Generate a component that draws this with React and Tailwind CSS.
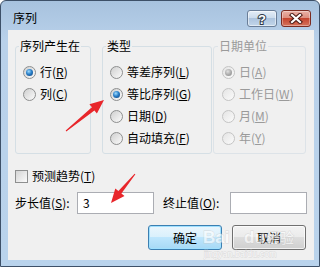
import React from "react";

function Radio({ checked, disabled, text, m }) {
  return (
    <div className="flex h-[22px] items-center">
      <span
        className={
          disabled
            ? "flex h-[13px] w-[13px] shrink-0 items-center justify-center rounded-full border border-[#c4c4c4] bg-[linear-gradient(135deg,#e4e4e4,#fbfbfb)]"
            : "flex h-[13px] w-[13px] shrink-0 items-center justify-center rounded-full border border-[#8e8f8f] bg-[linear-gradient(135deg,#cfcfcf,#fbfbfb)]"
        }
      >
        {checked && (
          <span
            className={
              disabled
                ? "h-[7px] w-[7px] rounded-full bg-[radial-gradient(circle_at_40%_35%,#e0e0e0_0%,#a8a8a8_55%,#8a8a8a_100%)]"
                : "h-[7px] w-[7px] rounded-full bg-[radial-gradient(circle_at_40%_35%,#9fdcff_0%,#2a7fc8_45%,#0b3b75_100%)]"
            }
          />
        )}
      </span>
      <span className={disabled ? "ml-[4px] text-[12px] leading-[14px] text-[#9a9a9a]" : "ml-[4px] text-[12px] leading-[14px] text-black"}>
        {text}(<span className="underline">{m}</span>)
      </span>
    </div>
  );
}

function Group({ title, disabled, className, inner, children }) {
  return (
    <fieldset className={className}>
      <legend className={disabled ? "ml-[4px] px-[1px] text-[12px] leading-[14px] text-[#9a9a9a]" : "ml-[3px] px-[1px] text-[12px] leading-[14px] text-black"}>
        {title}
      </legend>
      <div className={inner}>{children}</div>
    </fieldset>
  );
}

export default function App() {
  return (
    <div className="relative h-[268px] w-[321px] overflow-hidden bg-white font-['Noto_Sans_CJK_SC','Noto_Sans',sans-serif]">
      <div className="flex h-[267px] w-[320px] flex-col rounded-t-[6px] border border-[#3d5068] bg-[linear-gradient(#a7c2de,#b9d1ea_40px,#b9d3ec)]">
        {/* Title bar */}
        <div className="flex h-[29px] shrink-0 items-start">
          <span className="ml-[12px] mt-[9px] text-[12px] leading-[16px] text-black">序列</span>
          <div className="ml-auto mr-[8px] mt-[9px] flex gap-[4px]">
            <div className="flex h-[17px] w-[30px] items-center justify-center rounded-[3px] border border-[#6a7e98] bg-[linear-gradient(#e4edf7,#c9daec_50%,#adc4de_50%,#c2d6ea)] shadow-[inset_0_0_0_1px_rgba(255,255,255,0.5)]">
              <svg width="14" height="14" viewBox="0 0 14 14">
                <text x="7" y="12" textAnchor="middle" fontSize="13" fontWeight="bold" fontFamily="Liberation Sans, sans-serif" fill="#fff" stroke="#2e3a48" strokeWidth="2" paintOrder="stroke">?</text>
              </svg>
            </div>
            <div className="flex h-[17px] w-[30px] items-center justify-center rounded-[3px] border border-[#7b2c22] bg-[linear-gradient(#eab1a6,#dc8b7b_50%,#c5452f_50%,#d5735c)] shadow-[inset_0_0_0_1px_rgba(255,255,255,0.35)]">
              <svg width="14" height="11" viewBox="0 0 14 11">
                <path d="M3 2 L11 9 M11 2 L3 9" stroke="#4a1a14" strokeWidth="4.2" strokeLinecap="square" />
                <path d="M3 2 L11 9 M11 2 L3 9" stroke="#fff" strokeWidth="2.2" strokeLinecap="square" />
              </svg>
            </div>
          </div>
        </div>

        {/* Content */}
        <div className="ml-[7px] mr-[5px] flex h-[230px] flex-col bg-[#f0f0f0] pl-[7px] pt-[9px]">
          <div className="flex">
            <Group title="序列产生在" className="h-[115px] w-[76px] rounded-[3px] border border-[#d5dfe5]" inner="pl-[7px] pt-[8px]">
              <Radio checked text="行" m="R" />
              <Radio text="列" m="C" />
            </Group>
            <Group title="类型" className="ml-[11px] h-[115px] w-[110px] rounded-[3px] border border-[#d5dfe5]" inner="pl-[7px] pt-[8px]">
              <Radio text="等差序列" m="L" />
              <Radio checked text="等比序列" m="G" />
              <Radio text="日期" m="D" />
              <Radio text="自动填充" m="F" />
            </Group>
            <Group disabled title="日期单位" className="ml-[1px] h-[115px] w-[93px] rounded-[3px] border border-[#dde3e8]" inner="pl-[8px] pt-[8px]">
              <Radio disabled checked text="日" m="A" />
              <Radio disabled text="工作日" m="W" />
              <Radio disabled text="月" m="M" />
              <Radio disabled text="年" m="Y" />
            </Group>
          </div>

          <div className="mt-[14px] flex h-[16px] items-center">
            <span className="h-[13px] w-[13px] border border-[#8e8f8f] bg-[linear-gradient(135deg,#d4d4d4,#fbfbfb)]" />
            <span className="ml-[4px] text-[12px] leading-[14px] text-black">
              预测趋势(<span className="underline">T</span>)
            </span>
          </div>

          <div className="mt-[8px] flex h-[22px] items-center">
            <span className="w-[62px] text-[12px] leading-[14px] text-black">
              步长值(<span className="underline">S</span>):
            </span>
            <div className="flex h-[22px] w-[77px] items-center border border-[#abadb3] bg-white pl-[5px] text-[12px] text-black">3</div>
            <span className="ml-[9px] w-[67px] text-[12px] leading-[14px] text-black">
              终止值(<span className="underline">O</span>):
            </span>
            <div className="h-[22px] w-[77px] border border-[#abadb3] bg-white" />
          </div>

          <div className="mt-[11px] flex justify-end gap-[10px] pr-[8px]">
            <div className="flex h-[25px] w-[74px] items-center justify-center rounded-[3px] border border-[#3c7fb1] bg-[linear-gradient(#eaf6fd,#d9f0fc_50%,#bee6fd_50%,#a7d9f5)] shadow-[inset_0_0_0_1px_#9fe0ff] text-[12px] text-black">
              确定
            </div>
            <div className="flex h-[25px] w-[74px] items-center justify-center rounded-[3px] border border-[#707070] bg-[linear-gradient(#f2f2f2,#ebebeb_50%,#dddddd_50%,#cfcfcf)] shadow-[inset_0_0_0_1px_rgba(255,255,255,0.7)] text-[12px] text-black">
              取消
            </div>
          </div>
        </div>
      </div>

      {/* Watermark + annotation arrows */}
      <svg className="pointer-events-none absolute left-0 top-0" width="321" height="268" viewBox="0 0 321 268">
        <g opacity="0.6" fontFamily="Liberation Sans, sans-serif" fill="#ffffff" stroke="#c8c8c8" strokeWidth="0.8" paintOrder="stroke">
          <text x="203" y="243" fontSize="17" fontWeight="bold">Bai</text>
          <text x="244" y="243" fontSize="17" fontWeight="bold">du</text>
          <text x="266" y="243" fontSize="14" fontFamily="Noto Sans CJK SC, sans-serif">经验</text>
          <text x="204" y="257" fontSize="9">jingyan.baidu.com</text>
        </g>
        <polygon
          fill="#e8262b"
          points="66.3,131.4 94.4,110.4 96.9,113.5 104,100 89.4,104.2 91.9,107.3 65.7,130.6"
        />
        <polygon
          fill="#e8262b"
          points="135.4,174.3 121.4,193.5 124.5,196.0 111,203 115.3,188.4 118.4,190.9 134.6,173.7"
        />
      </svg>
    </div>
  );
}
